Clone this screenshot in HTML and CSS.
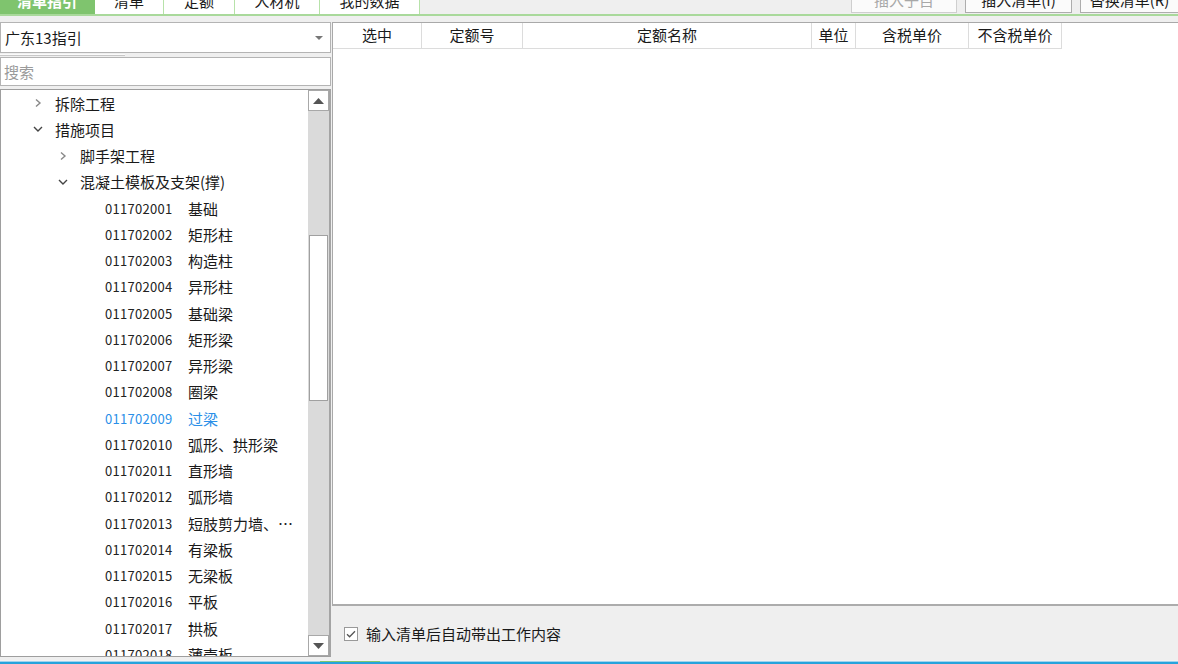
FILE: index.html
```html
<!DOCTYPE html>
<html lang="zh">
<head>
<meta charset="utf-8">
<link rel="stylesheet" href="styles.css">
</head>
<body>
<div class="app">
  <div class="topbar">
    <div class="tabs">
      <div class="tab active w95"><span>清单指引</span></div>
      <div class="tab w69"><span>清单</span></div>
      <div class="tab w71"><span>定额</span></div>
      <div class="tab w85"><span>人材机</span></div>
      <div class="tab w100"><span>我的数据</span></div>
    </div>
    <div class="actions">
      <div class="btn disabled b1"><span>插入子目</span></div>
      <div class="btn b2"><span>插入清单(I)</span></div>
      <div class="btn b3"><span>替换清单(R)</span></div>
    </div>
  </div>
  <div class="main">
    <div class="left">
      <div class="select">
        <span class="select-text">广东13指引</span>
        <svg class="select-arrow" width="8" height="4" viewBox="0 0 8 4"><path d="M0 0h8L4 4z" fill="#777"/></svg>
      </div>
      <div class="splitter"><div class="split-line"></div></div>
      <div class="search"><span class="placeholder">搜索</span></div>
      <div class="tree">
        <div class="tree-body">
          <div class="row l1"><svg class="chev" width="10" height="10" viewBox="0 0 10 10"><path d="M3 1.5l4 3.5-4 3.5" fill="none" stroke="#888" stroke-width="1.4"/></svg><span class="lbl">拆除工程</span></div>
          <div class="row l1"><svg class="chev" width="10" height="10" viewBox="0 0 10 10"><path d="M1 3l4 4 4-4" fill="none" stroke="#444" stroke-width="1.4"/></svg><span class="lbl">措施项目</span></div>
          <div class="row l2"><svg class="chev" width="10" height="10" viewBox="0 0 10 10"><path d="M3 1.5l4 3.5-4 3.5" fill="none" stroke="#888" stroke-width="1.4"/></svg><span class="lbl">脚手架工程</span></div>
          <div class="row l2"><svg class="chev" width="10" height="10" viewBox="0 0 10 10"><path d="M1 3l4 4 4-4" fill="none" stroke="#444" stroke-width="1.4"/></svg><span class="lbl">混凝土模板及支架(撑)</span></div>
          <div class="row l3"><span class="code">011702001</span><span class="lbl">基础</span></div>
          <div class="row l3"><span class="code">011702002</span><span class="lbl">矩形柱</span></div>
          <div class="row l3"><span class="code">011702003</span><span class="lbl">构造柱</span></div>
          <div class="row l3"><span class="code">011702004</span><span class="lbl">异形柱</span></div>
          <div class="row l3"><span class="code">011702005</span><span class="lbl">基础梁</span></div>
          <div class="row l3"><span class="code">011702006</span><span class="lbl">矩形梁</span></div>
          <div class="row l3"><span class="code">011702007</span><span class="lbl">异形梁</span></div>
          <div class="row l3"><span class="code">011702008</span><span class="lbl">圈梁</span></div>
          <div class="row l3 sel"><span class="code">011702009</span><span class="lbl">过梁</span></div>
          <div class="row l3"><span class="code">011702010</span><span class="lbl">弧形、拱形梁</span></div>
          <div class="row l3"><span class="code">011702011</span><span class="lbl">直形墙</span></div>
          <div class="row l3"><span class="code">011702012</span><span class="lbl">弧形墙</span></div>
          <div class="row l3"><span class="code">011702013</span><span class="lbl">短肢剪力墙、…</span></div>
          <div class="row l3"><span class="code">011702014</span><span class="lbl">有梁板</span></div>
          <div class="row l3"><span class="code">011702015</span><span class="lbl">无梁板</span></div>
          <div class="row l3"><span class="code">011702016</span><span class="lbl">平板</span></div>
          <div class="row l3"><span class="code">011702017</span><span class="lbl">拱板</span></div>
          <div class="row l3"><span class="code">011702018</span><span class="lbl">薄壳板</span></div>
        </div>
        <div class="scrollbar">
          <div class="sb-btn"><svg width="11" height="6" viewBox="0 0 11 6"><path d="M0 6L5.5 0 11 6z" fill="#555"/></svg></div>
          <div class="sb-track">
            <div class="sb-before"></div>
            <div class="sb-thumb"></div>
            <div class="sb-after"></div>
          </div>
          <div class="sb-btn"><svg width="11" height="6" viewBox="0 0 11 6"><path d="M0 0h11L5.5 6z" fill="#555"/></svg></div>
        </div>
      </div>
    </div>
    <div class="right">
      <div class="grid">
        <div class="grid-head">
          <div class="th c1">选中</div>
          <div class="th c2">定额号</div>
          <div class="th c3">定额名称</div>
          <div class="th c4">单位</div>
          <div class="th c5">含税单价</div>
          <div class="th c6">不含税单价</div>
        </div>
      </div>
      <div class="footer">
        <div class="check">
          <svg width="14" height="14" viewBox="0 0 14 14"><rect x="0.5" y="0.5" width="13" height="13" fill="#fff" stroke="#999"/><path d="M3 7.2l2.6 2.6L11 4.3" fill="none" stroke="#555" stroke-width="1.3"/></svg>
          <span>输入清单后自动带出工作内容</span>
        </div>
      </div>
    </div>
  </div>
  <div class="statusline"><div class="status-green"></div></div>
</div>
</body>
</html>
```

FILE: styles.css
```css
* { box-sizing: border-box; }
html, body { margin: 0; padding: 0; }
body {
  width: 1178px;
  height: 664px;
  overflow: hidden;
  background: #efefef;
  font-family: "Noto Sans CJK SC", "Microsoft YaHei", sans-serif;
  font-size: 15px;
  color: #1a1a1a;
}
.app { display: flex; flex-direction: column; height: 664px; }

.topbar {
  height: 16px;
  display: flex;
  justify-content: space-between;
  border-bottom: 2px solid #a9d99b;
  background: #efefef;
  flex: none;
}
.tabs { display: flex; height: 14px; }
.tab {
  height: 14px;
  overflow: hidden;
  background: #fff;
  border-right: 1px solid #b7e2a9;
  text-align: center;
}
.tab span { display: block; line-height: 20px; margin-top: -9px; }
.tab.active { background: #7fc46e; color: #fff; border-right-color: #7fc46e; font-weight: bold; }
.w95 { width: 95px; }
.w69 { width: 69px; }
.w71 { width: 71px; }
.w85 { width: 85px; }
.w100 { width: 100px; }

.actions { display: flex; height: 13px; }
.btn {
  height: 13px;
  overflow: hidden;
  border: 1px solid #adadad;
  border-top: none;
  background: #fbfbfb;
  text-align: center;
  margin-left: 8px;
}
.btn span { display: block; line-height: 20px; margin-top: -10px; }
.btn.disabled { color: #a8a8a8; border-color: #cfcfcf; }
.b1 { width: 106px; }
.b2 { width: 107px; }
.b3 { width: 99px; margin-right: -1px; }

.main { flex: 1; display: flex; padding-top: 6px; min-height: 0; }

.left { width: 331px; display: flex; flex-direction: column; flex: none; }
.select {
  height: 31px;
  background: #fff;
  border: 1px solid #b4b4b4;
  display: flex;
  align-items: center;
  justify-content: space-between;
  padding: 0 7px 0 4px;
  flex: none;
}
.select-text { line-height: 20px; }
.splitter { height: 4px; position: relative; flex: none; }
.split-line { width: 125px; height: 2px; margin-top: 1px; border-bottom: 1px solid #c8c8c8; background: #fafafa; }
.search {
  height: 29px;
  background: #fff;
  border: 1px solid #b4b4b4;
  display: flex;
  align-items: center;
  padding-left: 3px;
  flex: none;
}
.placeholder { color: #9a9a9a; }
.tree {
  margin-top: 3px;
  height: 568px;
  border: 1px solid #9e9e9e;
  border-right: 2px solid #a4a4a4;
  background: #fff;
  display: flex;
  flex: none;
}
.tree-body { flex: 1; overflow: hidden; padding-top: 0; }
.row { height: 26.25px; display: flex; align-items: center; white-space: nowrap; }
.row .chev { flex: none; margin-right: 12px; }
.l1 { padding-left: 32px; }
.l2 { padding-left: 57px; }
.l3 { padding-left: 104px; }
.code { width: 83px; font-size: 13px; letter-spacing: 0.3px; color: #222; flex: none; }
.sel .code, .sel .lbl { color: #2a8fe8; }

.scrollbar { width: 21px; display: flex; flex-direction: column; background: #dadada; flex: none; }
.sb-btn {
  height: 21px;
  background: #fff;
  border: 1px solid #a8a8a8;
  display: flex;
  align-items: center;
  justify-content: center;
  flex: none;
}
.sb-track { flex: 1; display: flex; flex-direction: column; }
.sb-before { height: 124px; }
.sb-thumb { height: 166px; background: #fff; border: 1px solid #a0a0a0; margin: 0 1px; }
.sb-after { flex: 1; }

.right { flex: 1; margin-left: 1px; display: flex; flex-direction: column; min-width: 0; }
.grid {
  height: 584px;
  background: #fff;
  border: 1px solid #a9a9a9;
  border-right: none;
  border-bottom: 2px solid #acacac;
  flex: none;
}
.grid-head { display: flex; height: 26px; }
.th {
  border-right: 1px solid #dcdcdc;
  border-bottom: 1px solid #dcdcdc;
  text-align: center;
  line-height: 24px;
  height: 26px;
}
.c1 { width: 89px; }
.c2 { width: 101px; }
.c3 { width: 289px; }
.c4 { width: 44px; }
.c5 { width: 113px; }
.c6 { width: 93px; }

.footer { flex: 1; display: flex; align-items: center; padding-left: 12px; }
.check { display: flex; align-items: center; gap: 8px; margin-top: 1px; }

.statusline {
  height: 4px;
  flex: none;
  border-top: 1px solid #f2f2f2;
  border-bottom: 2px solid #26a3dc;
  background: #9fd3ee;
}
.status-green { width: 60px; height: 1px; margin-left: 320px; background: #7fc46e; }
```
